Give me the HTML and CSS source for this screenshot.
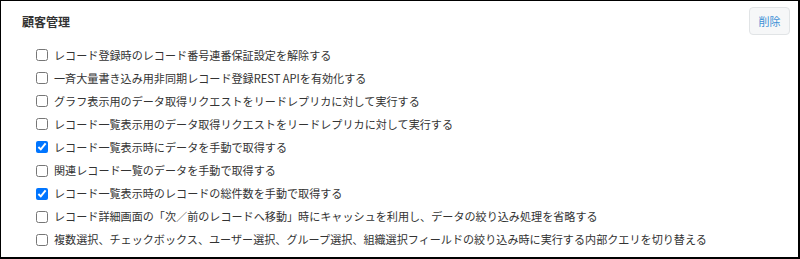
FILE: index.html
```html
<!DOCTYPE html>
<html lang="ja">
<head>
    <meta charset="UTF-8">
    <meta name="viewport" content="width=device-width, initial-scale=1.0">
    <title>顧客管理</title>
    <link rel="stylesheet" href="styles.css">
</head>
<body>
    <div class="panel">
        <div class="panel-header">
            <h2 class="panel-title">顧客管理</h2>
            <button class="button">削除</button>
        </div>
        <ul class="option-list">
            <li class="option"><label><input type="checkbox"><span>レコード登録時のレコード番号連番保証設定を解除する</span></label></li>
            <li class="option"><label><input type="checkbox"><span>一斉大量書き込み用非同期レコード登録REST APIを有効化する</span></label></li>
            <li class="option"><label><input type="checkbox"><span>グラフ表示用のデータ取得リクエストをリードレプリカに対して実行する</span></label></li>
            <li class="option"><label><input type="checkbox"><span>レコード一覧表示用のデータ取得リクエストをリードレプリカに対して実行する</span></label></li>
            <li class="option"><label><input type="checkbox" checked><span>レコード一覧表示時にデータを手動で取得する</span></label></li>
            <li class="option"><label><input type="checkbox"><span>関連レコード一覧のデータを手動で取得する</span></label></li>
            <li class="option"><label><input type="checkbox" checked><span>レコード一覧表示時のレコードの総件数を手動で取得する</span></label></li>
            <li class="option"><label><input type="checkbox"><span>レコード詳細画面の「次／前のレコードへ移動」時にキャッシュを利用し、データの絞り込み処理を省略する</span></label></li>
            <li class="option"><label><input type="checkbox"><span>複数選択、チェックボックス、ユーザー選択、グループ選択、組織選択フィールドの絞り込み時に実行する内部クエリを切り替える</span></label></li>
        </ul>
    </div>
</body>
</html>
```

FILE: styles.css
```css
body {
    margin: 0;
    background-color: #fff;
    font-family: "Noto Sans CJK JP", "Noto Sans", sans-serif;
    color: #333;
}
.panel {
    box-sizing: border-box;
    height: 259px;
    border-top: 1px solid #000;
    border-left: 1px solid #000;
    border-right: 2px solid #000;
    border-bottom: 2px solid #000;
    padding: 6px 8px 0 21px;
}
.panel-header {
    display: flex;
    justify-content: space-between;
    align-items: center;
}
.panel-title {
    margin: 0;
    font-size: 12px;
    font-weight: bold;
    color: #333;
}
.button {
    width: 41px;
    height: 28px;
    padding: 0;
    font-family: inherit;
    font-size: 11px;
    color: #3b8fd6;
    background-color: #f6f7f8;
    border: 1px solid #e1e4e6;
    border-radius: 4px;
    cursor: pointer;
}
.option-list {
    list-style: none;
    margin: 8px 0 0;
    padding: 0 0 0 14px;
}
.option {
    height: 23.1px;
    display: flex;
    align-items: center;
}
.option label {
    display: flex;
    align-items: center;
    font-size: 11.1px;
    color: #333;
    white-space: nowrap;
}
.option input {
    width: 12px;
    height: 12px;
    margin: 1px 6px 0 0;
}
```
